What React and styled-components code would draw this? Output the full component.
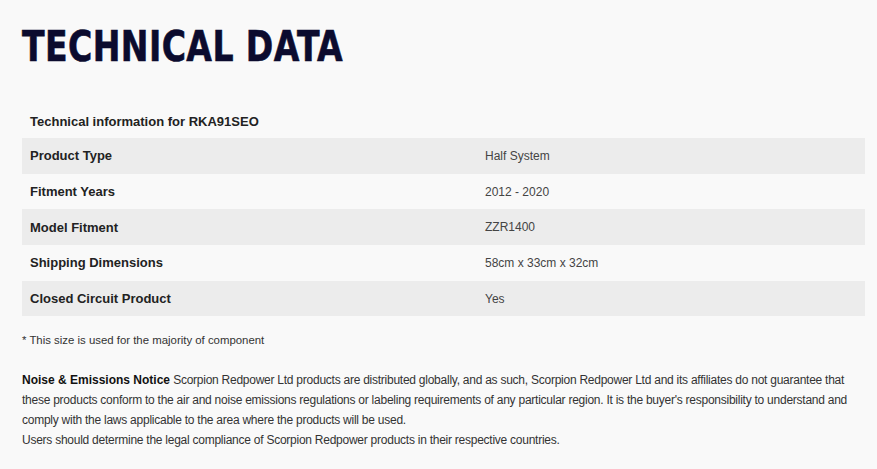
import React from "react";
import styled, { createGlobalStyle } from "styled-components";

const GlobalStyle = createGlobalStyle`
  html, body {
    margin: 0;
    padding: 0;
    background: #f9f9f9;
  }
  body {
    font-family: "Liberation Sans", Arial, sans-serif;
    color: #333;
  }
`;

const rows = [
  { label: "Product Type", value: "Half System" },
  { label: "Fitment Years", value: "2012 - 2020" },
  { label: "Model Fitment", value: "ZZR1400" },
  { label: "Shipping Dimensions", value: "58cm x 33cm x 32cm" },
  { label: "Closed Circuit Product", value: "Yes" },
];

const App = () => {
  return (
    <Page>
      <GlobalStyle />
      <Title>TECHNICAL DATA</Title>

      <Table>
        <HeadRow>
          <span>Technical information for RKA91SEO</span>
        </HeadRow>
        {rows.map(({ label, value }, index) => (
          <Row key={label} shaded={index % 2 === 0}>
            <Label>{label}</Label>
            <Value>{value}</Value>
          </Row>
        ))}
      </Table>

      <Footnote>* This size is used for the majority of component</Footnote>

      <Notice>
        <strong>Noise &amp; Emissions Notice</strong> Scorpion Redpower Ltd
        products are distributed globally, and as such, Scorpion Redpower Ltd
        and its affiliates do not guarantee that these products conform to the
        air and noise emissions regulations or labeling requirements of any
        particular region. It is the buyer's responsibility to understand and
        comply with the laws applicable to the area where the products will be
        used.
        <br />
        Users should determine the legal compliance of Scorpion Redpower
        products in their respective countries.
      </Notice>
    </Page>
  );
};

export default App;

const Page = styled.div`
  width: 843px;
  padding: 24px 12px 0 22px;
`;

// no narrow DIN face available, so squeeze the condensed bold a bit more
const Title = styled.h1`
  margin: 0;
  display: inline-block;
  font-family: "DejaVu Sans Condensed", "DejaVu Sans", sans-serif;
  font-weight: 700;
  font-size: 43px;
  line-height: 44px;
  letter-spacing: 0.5px;
  color: #0b0b2e;
  transform: scaleX(0.855);
  transform-origin: left center;
  -webkit-text-stroke: 0.6px #0b0b2e;
`;

const Table = styled.div`
  margin-top: 36px;
  display: flex;
  flex-direction: column;
`;

const HeadRow = styled.div`
  height: 34px;
  display: flex;
  align-items: center;
  padding: 0 8px;
  font-size: 13px;
  font-weight: 700;
  color: #222;
`;

const Row = styled.div`
  height: 35.7px;
  display: grid;
  grid-template-columns: 455px 1fr;
  align-items: center;
  padding: 0 8px;
  background-color: ${({ shaded }) => (shaded ? "#ececec" : "transparent")};
`;

const Label = styled.span`
  font-size: 13px;
  font-weight: 700;
  color: #222;
`;

const Value = styled.span`
  font-size: 12px;
  color: #444;
`;

const Footnote = styled.p`
  margin: 16px 0 0;
  font-size: 11.4px;
  line-height: 16px;
  color: #333;
`;

const Notice = styled.p`
  margin: 22px 0 0;
  font-size: 12px;
  line-height: 20px;
  letter-spacing: -0.25px;
  color: #333;

  strong {
    color: #111;
    letter-spacing: 0;
  }
`;
